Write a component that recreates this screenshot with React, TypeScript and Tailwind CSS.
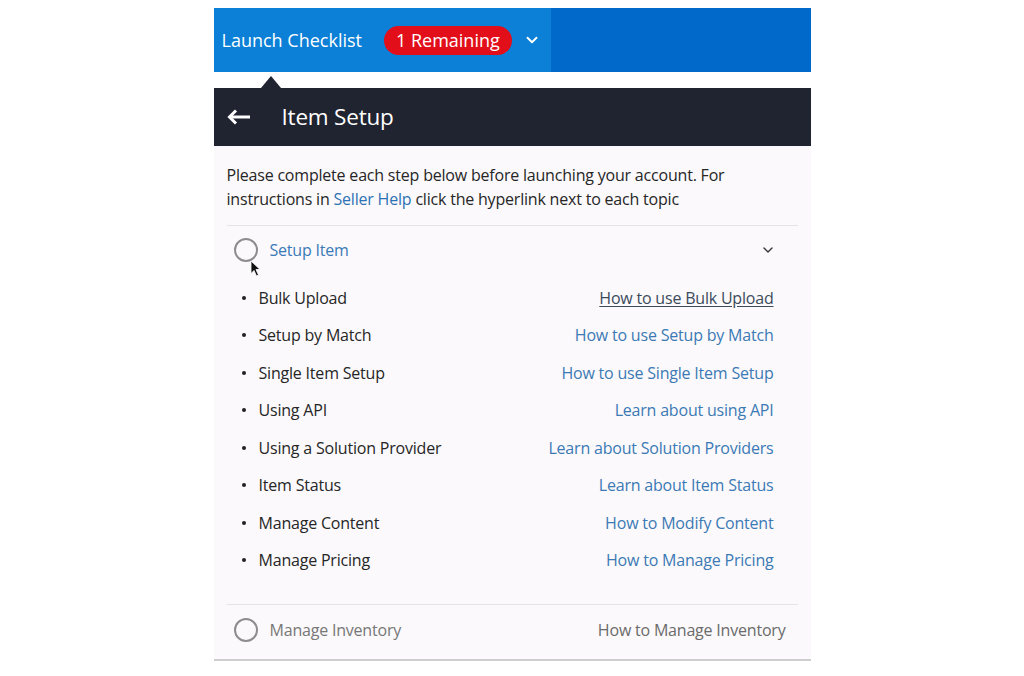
import { ChevronDown } from "lucide-react";

const steps = [
  { label: "Bulk Upload", link: "How to use Bulk Upload", active: true },
  { label: "Setup by Match", link: "How to use Setup by Match" },
  { label: "Single Item Setup", link: "How to use Single Item Setup" },
  { label: "Using API", link: "Learn about using API" },
  { label: "Using a Solution Provider", link: "Learn about Solution Providers" },
  { label: "Item Status", link: "Learn about Item Status" },
  { label: "Manage Content", link: "How to Modify Content" },
  { label: "Manage Pricing", link: "How to Manage Pricing" },
];

function Cursor() {
  return (
    <svg width="12" height="17" viewBox="0 0 12 17" className="absolute left-[23px] top-[34px]">
      <path d="M1 1 L1 13.5 L4 10.5 L6.5 16 L8.5 15 L6 9.5 L10 9.5 Z" fill="#111" stroke="#fff" strokeWidth="0.8" />
    </svg>
  );
}

function BackArrow() {
  return (
    <svg width="24" height="16" viewBox="0 0 24 16" fill="none">
      <path d="M23 8H3" stroke="white" strokeWidth="3" />
      <path d="M9 1.5L2.5 8L9 14.5" stroke="white" strokeWidth="3" />
    </svg>
  );
}

function App() {
  return (
    <div className="min-h-[676px] bg-white pt-2 font-['Open_Sans',sans-serif]">
      <div className="mx-auto w-[597px]">
        {/* top bar */}
        <div className="flex h-16">
          <div className="flex w-[337px] items-center bg-[#0b80d6] pl-2 text-white">
            <span className="text-[18px]">Launch Checklist</span>
            <span className="ml-[22px] flex h-[29px] items-center rounded-full bg-[#e20f1b] px-[12px] text-[18px]">
              1 Remaining
            </span>
            <ChevronDown size={18} strokeWidth={2.5} className="ml-[11px]" />
          </div>
          <div className="flex-1 bg-[#0069c9]" />
        </div>

        {/* pointer gap */}
        <div className="h-4 pl-[47px] pt-[4px]">
          <div className="h-0 w-0 border-x-[10px] border-b-[12px] border-x-transparent border-b-[#1f2430]" />
        </div>

        {/* dark header */}
        <div className="flex h-[58px] items-center bg-[#1f2430] pl-[13px] text-white">
          <BackArrow />
          <span className="ml-[31px] text-[22.5px] tracking-[-0.2px]">Item Setup</span>
        </div>

        {/* content */}
        <div className="border-b-2 border-[#cfcdd0] bg-[#fbf9fb] px-[13px]">
          <p className="pt-[17px] pb-[14px] text-[16px] leading-6 tracking-[-0.2px] text-[#262626]">
            Please complete each step below before launching your account. For instructions in{" "}
            <span className="text-[#2d72b4]">Seller Help</span> click the hyperlink next to each topic
          </p>

          <div className="border-t border-[#e6e3e6]">
            <div className="relative flex h-[48px] items-center pl-[7px] pr-[22px]">
              <span className="h-6 w-6 rounded-full border-2 border-[#8d8d8d]" />
              <span className="ml-[12px] text-[16px] tracking-[-0.2px] text-[#3a7ab8]">Setup Item</span>
              <ChevronDown size={16} strokeWidth={2} className="ml-auto text-[#333]" />
              <Cursor />
            </div>

            <ul className="pb-[25px] pl-[15px] pr-[24px] pt-[5px]">
              {steps.map((s) => (
                <li key={s.label} className="flex h-[37.5px] items-center text-[16px] tracking-[-0.2px]">
                  <span className="mr-[13px] h-[4px] w-[4px] rounded-full bg-[#222]" />
                  <span className="text-[#262626]">{s.label}</span>
                  <a
                    className={`ml-auto ${
                      s.active ? "text-[#3b4b5c] underline underline-offset-2" : "text-[#3b7ab5]"
                    }`}
                  >
                    {s.link}
                  </a>
                </li>
              ))}
            </ul>
          </div>

          <div className="flex h-[55px] items-center border-t border-[#e6e3e6] pb-[4px] pl-[7px] pr-[12px]">
            <span className="h-6 w-6 rounded-full border-2 border-[#8d8d8d]" />
            <span className="ml-[12px] text-[16px] tracking-[-0.2px] text-[#777]">Manage Inventory</span>
            <span className="ml-auto text-[16px] tracking-[-0.2px] text-[#6b6b6b]">How to Manage Inventory</span>
          </div>
        </div>
      </div>
    </div>
  );
}

export default App;
